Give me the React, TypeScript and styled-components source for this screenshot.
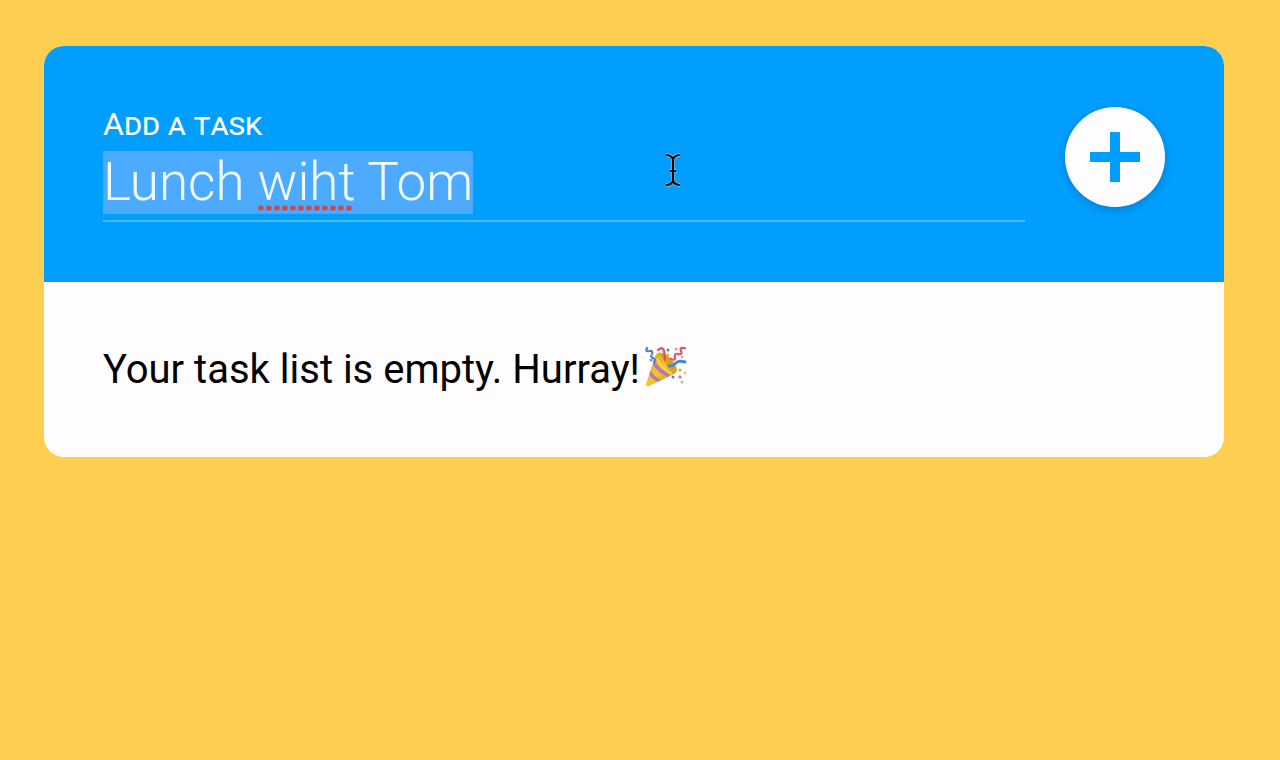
import React, { useEffect, useRef, useState } from "react";
import styled, { createGlobalStyle } from "styled-components";

const GlobalStyle = createGlobalStyle`
  *, *::before, *::after { box-sizing: border-box; }
  body {
    margin: 0;
    background: #fdce50;
    font-family: Roboto, "Liberation Sans", sans-serif;
    color: #000;
  }
`;

const Page = styled.main`
  padding: 46px 56px 46px 44px;
`;

const Card = styled.section`
  position: relative;
  border-radius: 20px;
  overflow: hidden;
  background: #fffdff;
`;

const TaskForm = styled.form`
  display: flex;
  align-items: flex-start;
  gap: 40px;
  padding: 61px 59px 60px;
  background: #009fff;
`;

const Field = styled.div`
  position: relative;
  flex: 1;
  min-width: 0;
  display: flex;
  flex-direction: column;
`;

const Label = styled.label`
  font-size: 32px;
  line-height: 34px;
  font-variant: small-caps;
  color: #fff;
`;

const TaskInput = styled.input`
  width: 100%;
  padding: 10px 0 6px;
  border: 0;
  border-bottom: 2px solid #4dbaff;
  border-radius: 0;
  outline: 0;
  background: transparent;
  color: #f0f9ff;
  caret-color: transparent;
  font: 300 53px/63px Roboto, "Liberation Sans", sans-serif;

  &::selection {
    background: rgba(77, 171, 255, 0.996);
    color: #f0f9ff;
    -webkit-text-stroke: 1px #f0f9ff;
  }
`;

const SpellingMark = styled.svg`
  position: absolute;
  left: 154px;
  bottom: 11px;
  pointer-events: none;
`;

const AddButton = styled.button`
  flex: none;
  display: grid;
  place-items: center;
  width: 100px;
  height: 100px;
  padding: 0;
  border: 0;
  border-radius: 50%;
  background: #fffdff;
  box-shadow: 0 2px 10px rgba(0, 40, 90, 0.3);
  cursor: pointer;
`;

const EmptyList = styled.div`
  display: flex;
  align-items: flex-start;
  gap: 5px;
  padding: 61px 59px 60px;
`;

const Message = styled.p`
  margin: 0;
  font-size: 40px;
  line-height: 54px;
`;

const Popper = styled.svg`
  flex: none;
  margin-top: 3px;
`;

const Pointer = styled.svg`
  position: absolute;
  left: 621px;
  top: 107px;
  pointer-events: none;
`;

const dots = Array.from({ length: 12 }, (_, i) => 3 + i * 8);

function PartyPopper() {
  return (
    <Popper width="42" height="42" viewBox="0 0 42 42" role="img" aria-label="Party popper">
      <defs>
        <linearGradient id="cone" x1="0" y1="0" x2="1" y2="1">
          <stop offset="0" stopColor="#d99a13" />
          <stop offset="0.5" stopColor="#f4c62c" />
          <stop offset="1" stopColor="#b9780b" />
        </linearGradient>
        <clipPath id="coneShape">
          <path d="M1 38.5 10 11Q12 5 18 7Q26 10 31 20Q34 26 28 28.500L4 40Q1 41 1 38.500Z" />
        </clipPath>
      </defs>
      <g clipPath="url(#coneShape)">
        <path d="M0 4H34V42H0Z" fill="url(#cone)" />
        <path d="M8 15Q12 24 24 30M4 25Q8 33 17 36" fill="none" stroke="#b47ab8" strokeWidth="3.500" />
        <path d="M15 8Q19 18 29 26Q32 20 25 12Q19 6 15 8Z" fill="#d9a01b" />
        <path d="M12 12Q16 22 27 28" fill="none" stroke="#f8d94b" strokeWidth="2" />
      </g>
      <g fill="none" strokeLinecap="round" strokeWidth="2.200">
        <path d="M2 2Q0 6 4 5T7 8Q5 11 8 12T9 16" stroke="#4f79c6" />
        <path d="M13 4Q18 0 19 5T20 14" stroke="#d85166" />
        <path d="M40 2Q34 1 36 5T33 8Q29 7 30 11T26 13" stroke="#d95773" />
        <path d="M24 20Q28 20 31 17T40 16" stroke="#438bd0" strokeWidth="3" />
      </g>
      <path d="M2 3 4 5M6 7 7 10" stroke="#7bb2e6" />
      <path d="M37 3 39 4M31 8 33 10M16 4 18 5" stroke="#f3a0b0" />
      <g>
        <circle cx="23" cy="4" r="1.500" fill="#567fc9" />
        <circle cx="31" cy="3" r="1.500" fill="#e7a23b" />
        <circle cx="6" cy="14" r="1.500" fill="#5b9bd6" />
        <circle cx="23" cy="9" r="1.500" fill="#e6b052" />
        <circle cx="37" cy="11" r="1.300" fill="#e59aa2" />
        <circle cx="35" cy="24" r="1.500" fill="#e59c46" />
        <circle cx="40" cy="27" r="1.500" fill="#edc06a" />
        <circle cx="28" cy="31" r="1.500" fill="#5583c4" />
        <circle cx="35" cy="31" r="1.700" fill="#d77a93" />
        <circle cx="37" cy="36" r="1.500" fill="#a9c9a0" />
      </g>
    </Popper>
  );
}

export default function App() {
  const [task, setTask] = useState("Lunch wiht Tom");
  const input = useRef<HTMLInputElement>(null);

  useEffect(() => {
    input.current?.focus();
    input.current?.select();
  }, []);

  return (
    <>
      <GlobalStyle />
      <Page>
        <Card>
          <TaskForm onSubmit={(e: React.FormEvent) => e.preventDefault()}>
            <Field>
              <Label htmlFor="task">Add a task</Label>
              <TaskInput
                id="task"
                ref={input}
                type="text"
                spellCheck={false}
                autoComplete="off"
                value={task}
                onChange={(e: React.ChangeEvent<HTMLInputElement>) => setTask(e.target.value)}
              />
              <SpellingMark width="96" height="6" viewBox="0 0 96 6" aria-hidden="true">
                {dots.map((x) => (
                  <circle key={x} cx={x + 1} cy="3" r="2.800" fill="#cf4a4c" />
                ))}
              </SpellingMark>
            </Field>
            <AddButton type="submit" aria-label="Add task">
              <svg width="50" height="50" viewBox="0 0 50 50" aria-hidden="true">
                <path d="M20 0h10v20h20v10H30v20H20V30H0V20h20Z" fill="#009fff" />
              </svg>
            </AddButton>
          </TaskForm>
          <EmptyList>
            <Message>Your task list is empty. Hurray!</Message>
            <PartyPopper />
          </EmptyList>
          <Pointer width="16" height="34" viewBox="0 0 16 34" fill="none" aria-hidden="true">
            <path
              d="M1 2Q6 2 8 6Q10 2 15 2M8 6V28M1 32Q6 32 8 28Q10 32 15 32M5 18H11"
              stroke="#8fc9ee"
              strokeWidth="3.400"
            />
            <path
              d="M1 2Q6 2 8 6Q10 2 15 2M8 6V28M1 32Q6 32 8 28Q10 32 15 32M5 18H11"
              stroke="#000"
              strokeWidth="2.200"
            />
          </Pointer>
        </Card>
      </Page>
    </>
  );
}
